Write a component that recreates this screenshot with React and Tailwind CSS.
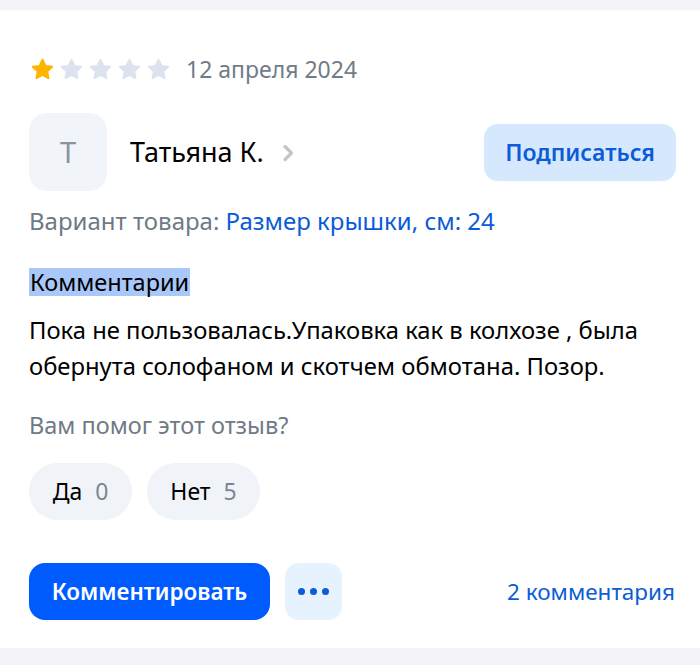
import React from 'react';

const Star = ({ filled }) => (
    <svg width="23" height="23" viewBox="0 0 24 24" className={filled ? 'text-[#ffb400]' : 'text-[#dce3ee]'}>
        <path
            fill="currentColor"
            stroke="currentColor"
            strokeWidth="2"
            strokeLinejoin="round"
            d="M12 1.8l3.1 6.4 7 .9-5.1 4.9 1.3 7L12 17.6l-6.3 3.4 1.3-7-5.1-4.9 7-.9z"
        />
    </svg>
);

const App = () => {
    const rating = 1;

    return (
        <div className="w-[700px] h-[665px] bg-[#f2f4f8] pt-[10px] font-['Noto_Sans',sans-serif]">
            <div className="bg-white h-[638px] px-[29px] pt-[46px]">
                {/* --- rating + date --- */}
                <div className="flex items-center h-[26px]">
                    <div className="flex gap-[6px] ml-[2px]">
                        {[1, 2, 3, 4, 5].map((i) => (
                            <Star key={i} filled={i <= rating} />
                        ))}
                    </div>
                    <span className="ml-[16px] text-[23px] leading-[26px] text-[#707c88]">12 апреля 2024</span>
                </div>

                {/* --- author --- */}
                <div className="flex items-center justify-between mt-[31px]">
                    <div className="flex items-center">
                        <div className="w-[78px] h-[78px] rounded-[18px] bg-[#f1f4f9] flex items-center justify-center text-[29px] text-[#8a949e]">
                            T
                        </div>
                        <span className="ml-[23px] text-[27px] text-black">Татьяна К.</span>
                        <svg width="16" height="20" viewBox="0 0 16 20" className="ml-[17px] mt-[2px]">
                            <path d="M4 3.5l6.5 6.5-6.5 6.5" fill="none" stroke="#c2c6cc" strokeWidth="3.2" strokeLinecap="round" strokeLinejoin="round" />
                        </svg>
                    </div>
                    <button className="mr-[-5px] h-[57px] w-[192px] rounded-[14px] bg-[#d6e8fd] text-[#0b5cd5] text-[23px] font-semibold">
                        Подписаться
                    </button>
                </div>

                <p className="mt-[14px] text-[24px] leading-[32px] text-[#6e7a86]">
                    Вариант товара: <span className="text-[#0a5bd8]">Размер крышки, см: 24</span>
                </p>

                {/* --- comment --- */}
                <div className="mt-[31px] h-[28px]">
                    <span className="bg-[#a9c7f8] text-[23.5px] text-black px-[1px] leading-[28px] inline-block">Комментарии</span>
                </div>
                <p className="mt-[16px] text-[23.8px] leading-[36px] text-black">
                    Пока не пользовалась.Упаковка как в колхозе , была обернута солофаном и скотчем обмотана. Позор.
                </p>

                <p className="mt-[25px] text-[23.5px] leading-[32px] text-[#6e7a86]">Вам помог этот отзыв?</p>

                <div className="flex gap-[15px] mt-[22px]">
                    <button className="h-[57px] w-[103px] rounded-full bg-[#f0f3f8] text-[23px] text-black flex items-center justify-center gap-[13px]">
                        Да <span className="text-[#7c8690]">0</span>
                    </button>
                    <button className="h-[57px] w-[113px] rounded-full bg-[#f0f3f8] text-[23px] text-black flex items-center justify-center gap-[13px]">
                        Нет <span className="text-[#7c8690]">5</span>
                    </button>
                </div>

                {/* --- actions --- */}
                <div className="flex items-center mt-[43px]">
                    <button className="h-[57px] w-[241px] rounded-[16px] bg-[#005bff] text-white text-[22.5px] font-semibold">
                        Комментировать
                    </button>
                    <button className="ml-[15px] h-[57px] w-[57px] rounded-[14px] bg-[#e6f3fe] flex items-center justify-center gap-[5px]">
                        <span className="w-[7px] h-[7px] rounded-full bg-[#0b5cd5]"></span>
                        <span className="w-[7px] h-[7px] rounded-full bg-[#0b5cd5]"></span>
                        <span className="w-[7px] h-[7px] rounded-full bg-[#0b5cd5]"></span>
                    </button>
                    <span className="ml-auto mr-[-4px] text-[22.5px] text-[#0b5cd5]">2 комментария</span>
                </div>
            </div>
        </div>
    );
};

export default App;
